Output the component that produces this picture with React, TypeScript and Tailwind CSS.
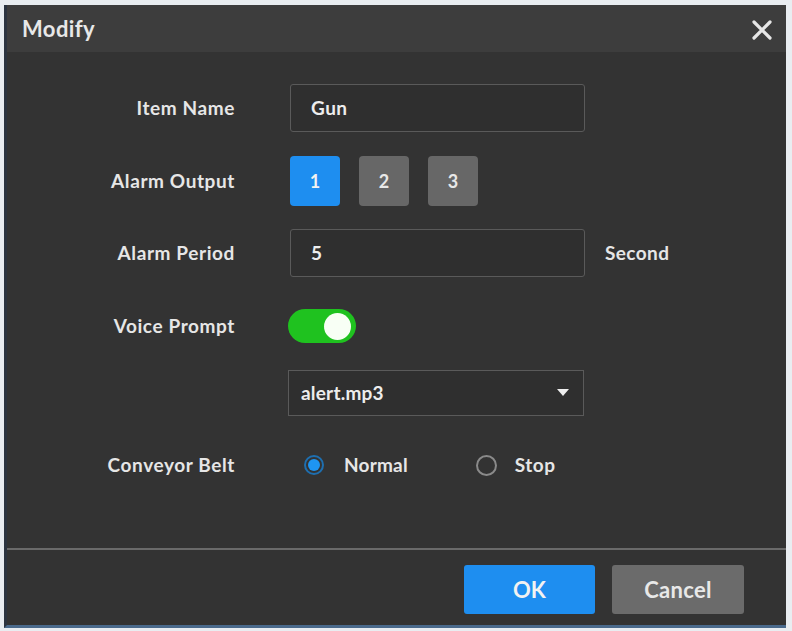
import React from "react";

const font = { fontFamily: "Lato, 'Noto Sans', sans-serif" };

function Label({ children }: { children: React.ReactNode }) {
  return (
    <div className="w-[228px] shrink-0 text-right text-[19px] font-bold tracking-[0.6px] text-[#e6e6e6]">
      {children}
    </div>
  );
}

export default function App() {
  return (
    <div
      className="w-[792px] h-[631px] bg-[#e9edf1] pt-[5px] pl-[4px] pr-[6px] pb-[3px]"
      style={font}
    >
      <div className="w-[782px] h-[623px] flex flex-col bg-[#333333] border-l-[3px] border-[#2c3440] border-b-[3px] border-b-[#4a6a8c]">
        {/* Title bar */}
        <div className="h-[47px] shrink-0 flex items-center justify-between bg-[#3d3d3d] pl-[15px] pr-[14px]">
          <span className="text-[22px] font-bold text-[#e8e8e8] tracking-[0.4px]">Modify</span>
          <svg width="20" height="20" viewBox="0 0 20 20" className="mt-[2px]">
            <path d="M2 2 L18 18 M18 2 L2 18" stroke="#e6e6e6" strokeWidth="3.2" strokeLinecap="round" />
          </svg>
        </div>

        {/* Body */}
        <div className="flex-1 flex flex-col pt-[32px]">
          {/* Item Name */}
          <div className="flex items-center h-[48px]">
            <Label>Item Name</Label>
            <div className="ml-[55px] w-[295px] h-[48px] rounded-[3px] border-[1.5px] border-[#5a5a5a] bg-[#2f2f2f] flex items-center pl-[20px] text-[19px] font-bold tracking-[0.5px] text-[#ededed]">
              Gun
            </div>
          </div>

          {/* Alarm Output */}
          <div className="flex items-center h-[50px] mt-[24px]">
            <Label>Alarm Output</Label>
            <div className="ml-[55px] flex gap-[19px]">
              <div className="w-[50px] h-[50px] rounded-[4px] bg-[#1e8ef0] flex items-center justify-center text-[18px] font-bold text-[#f2f2f2]">1</div>
              <div className="w-[50px] h-[50px] rounded-[4px] bg-[#676767] flex items-center justify-center text-[18px] font-bold text-[#e8e8e8]">2</div>
              <div className="w-[50px] h-[50px] rounded-[4px] bg-[#676767] flex items-center justify-center text-[18px] font-bold text-[#e8e8e8]">3</div>
            </div>
          </div>

          {/* Alarm Period */}
          <div className="flex items-center h-[48px] mt-[23px]">
            <Label>Alarm Period</Label>
            <div className="ml-[55px] w-[295px] h-[48px] rounded-[3px] border-[1.5px] border-[#5a5a5a] bg-[#2f2f2f] flex items-center pl-[20px] text-[19px] font-bold text-[#ededed]">
              5
            </div>
            <span className="ml-[20px] text-[19px] font-bold text-[#e6e6e6] tracking-[0.4px]">Second</span>
          </div>

          {/* Voice Prompt */}
          <div className="flex items-center h-[34px] mt-[32px]">
            <Label>Voice Prompt</Label>
            <div className="ml-[53px] w-[68px] h-[34px] rounded-full bg-[#1fc21f] flex items-center justify-end pr-[5px]">
              <div className="w-[27px] h-[27px] rounded-full bg-[#f8fff5]" />
            </div>
          </div>

          {/* Select */}
          <div className="flex items-center h-[46px] mt-[27px]">
            <div className="w-[228px] shrink-0" />
            <div className="ml-[53px] w-[296px] h-[46px] border-[1.5px] border-[#5a5a5a] bg-[#2f2f2f] flex items-center justify-between pl-[12px] pr-[14px] text-[19px] font-bold text-[#ededed] tracking-[0.2px]">
              <span>alert.mp3</span>
              <svg width="12" height="8" viewBox="0 0 12 8">
                <path d="M0 0 L12 0 L6 7 Z" fill="#eeeeee" />
              </svg>
            </div>
          </div>

          {/* Conveyor Belt */}
          <div className="flex items-center h-[30px] mt-[34px]">
            <Label>Conveyor Belt</Label>
            <div className="ml-[69px] flex items-center">
              <div className="w-[20px] h-[20px] rounded-full border-[2px] border-[#1e6fb0] flex items-center justify-center">
                <div className="w-[12px] h-[12px] rounded-full bg-[#1e95f2]" />
              </div>
              <span className="ml-[20px] text-[19px] font-bold text-[#e6e6e6] tracking-[0.2px]">Normal</span>
              <div className="ml-[68px] w-[21px] h-[21px] rounded-full border-[2px] border-[#8a8a8a]" />
              <span className="ml-[18px] text-[19px] font-bold text-[#e6e6e6] tracking-[0.5px]">Stop</span>
            </div>
          </div>
        </div>

        {/* Footer */}
        <div className="h-[77px] shrink-0 border-t-[2px] border-[#6a6a6a] flex items-start justify-end gap-[17px] pt-[15px] pr-[42px]">
          <div className="w-[131px] h-[49px] rounded-[3px] bg-[#1e8ef0] flex items-center justify-center text-[22px] font-bold text-[#f2f2f2]">OK</div>
          <div className="w-[132px] h-[49px] rounded-[3px] bg-[#6b6b6b] flex items-center justify-center text-[22px] font-bold tracking-[0.3px] text-[#e8e8e8]">Cancel</div>
        </div>
      </div>
    </div>
  );
}
